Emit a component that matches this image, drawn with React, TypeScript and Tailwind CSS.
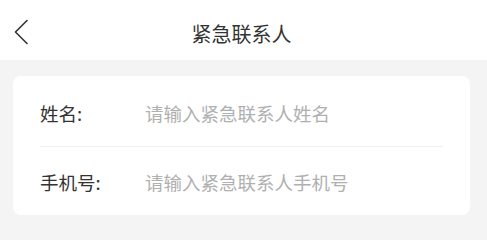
export default function App() {
  const font = { fontFamily: '"Noto Sans CJK SC", "Noto Sans", sans-serif' }
  return (
    <div className="w-[487px] h-[240px] bg-[#f4f4f4]" style={font}>
      <header className="relative h-[60px] bg-white flex items-center justify-center">
        <svg className="absolute left-[12px] top-[19px]" width="18" height="26" viewBox="0 0 18 26" fill="none">
          <path d="M15 1.5 L3.5 13 L15 24.5" stroke="#333" strokeWidth="1.6" strokeLinecap="round" strokeLinejoin="round" />
        </svg>
        <h1 className="text-[20px] text-[#333] leading-none mt-[8px] -ml-[4px]">紧急联系人</h1>
      </header>
      <div className="ml-[13px] w-[457px] mt-[16px] bg-white rounded-[8px] px-[27px]">
        <div className="h-[71px] pt-[6px] flex items-center border-b border-[#efefef]">
          <span className="w-[105px] text-[18.5px] text-[#333]">姓名:</span>
          <input
            className="flex-1 min-w-0 text-[18.5px] outline-none placeholder:text-[#b0b0b0] bg-transparent"
            placeholder="请输入紧急联系人姓名"
          />
        </div>
        <div className="h-[68px] pt-[3px] flex items-center">
          <span className="w-[105px] text-[18.5px] text-[#333]">手机号:</span>
          <input
            className="flex-1 min-w-0 text-[18.5px] outline-none placeholder:text-[#b0b0b0] bg-transparent"
            placeholder="请输入紧急联系人手机号"
          />
        </div>
      </div>
    </div>
  )
}
